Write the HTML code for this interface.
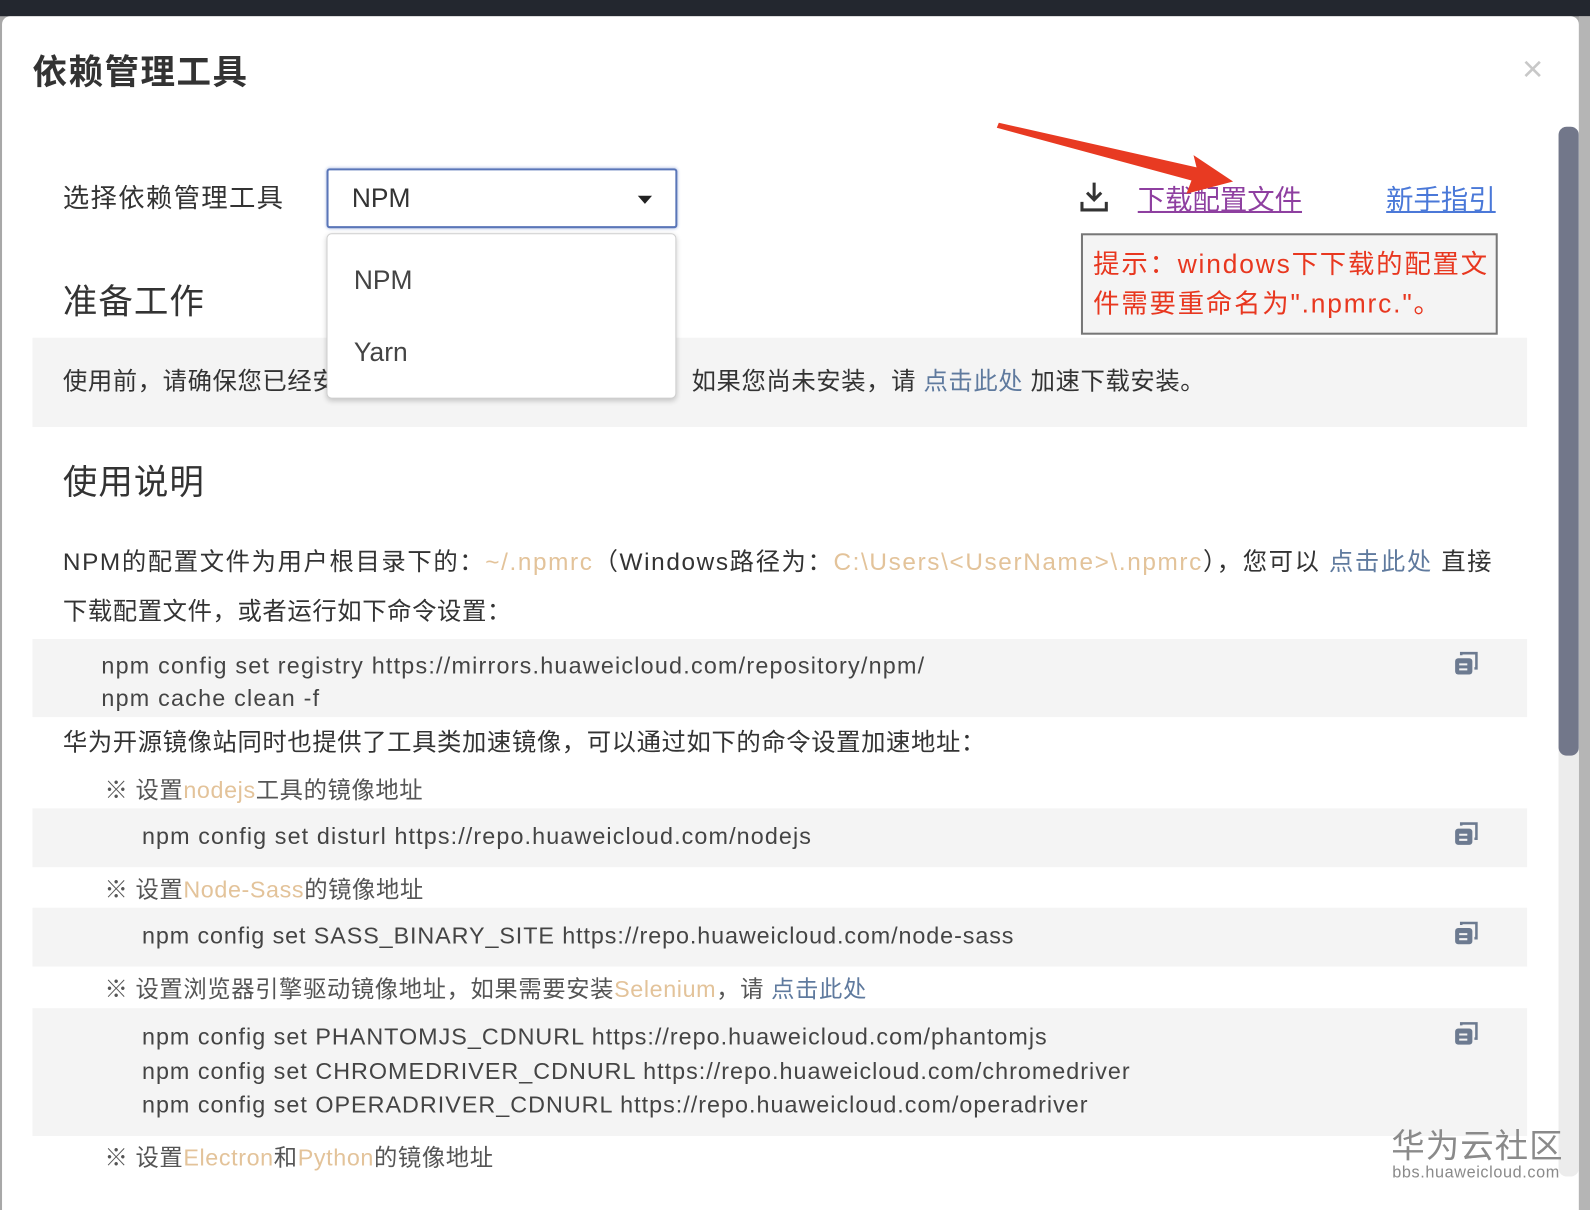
<!DOCTYPE html>
<html><head><meta charset="utf-8"><style>
html,body{margin:0;padding:0;width:1590px;height:1210px;overflow:hidden;background:#a8a8a8}
#w{position:absolute;left:0;top:0;width:1568px;height:1193px;transform:scale(1.01403,1.01425);transform-origin:0 0;font-family:"Liberation Sans","Noto Sans CJK SC",sans-serif;color:#333}
.a{position:absolute;white-space:nowrap}
.t{font-size:24px;line-height:30px;color:#333;letter-spacing:0.6px}
.c{font-size:23px;line-height:30px;color:#444;letter-spacing:1.1px}
.o{color:#e3c39a}
.l{color:#5f7a9e}
.g{position:absolute;left:32px;width:1474px;background:#f4f4f4}
.cp{position:absolute;left:1434px;width:24px;height:24px}
</style></head><body><div id="w">
<div class="a" style="left:0;top:0;width:1568px;height:16px;background:#23272f"></div>
<div class="a" style="left:1557px;top:16px;width:11px;height:1177px;background:#b5b5b5"></div>
<div class="a" style="left:2px;top:16px;width:1555px;height:1177px;background:#fff;border-radius:8px 8px 0 0;overflow:hidden">
 <div class="a" style="left:1535px;top:109px;width:20px;height:1035px;background:#ececec;border-radius:8px"></div>
 <div class="a" style="left:1535px;top:109px;width:20px;height:620px;background:#72778a;border-radius:8px"></div>
</div>
<div class="a" style="left:1501px;top:50px;font-size:36px;line-height:36px;color:#c8c8c8">×</div>
<div class="a" style="left:32px;top:53px;font-size:34px;line-height:38px;font-weight:bold;color:#333;letter-spacing:1.5px">依赖管理工具</div>
<div class="a" style="left:62px;top:180px;font-size:26px;line-height:30px;letter-spacing:1.3px">选择依赖管理工具</div>
<div class="a" style="left:322px;top:166px;width:342px;height:55px;border:2px solid #5a76b8;border-radius:3px;box-shadow:0 0 3px #a8b8e0"></div>
<div class="a" style="left:347px;top:180px;font-size:26px;line-height:30px">NPM</div>
<div class="a" style="left:629px;top:193px;width:0;height:0;border-left:7px solid transparent;border-right:7px solid transparent;border-top:8px solid #222"></div>

<div class="a" style="left:62px;top:279px;font-size:34px;line-height:38px;letter-spacing:1px">准备工作</div>
<div class="g" style="top:333px;height:88px"></div>
<div class="a t" style="left:62px;top:362px">使用前，请确保您已经安装了Node.js。</div>
<div class="a t" style="left:682px;top:362px">如果您尚未安装，请 <span class="l">点击此处</span> 加速下载安装。</div>

<div class="a" style="left:322px;top:230px;width:343px;height:161px;background:#fff;border:1px solid #cfcfcf;border-radius:5px;box-shadow:0 2px 5px rgba(0,0,0,.2)"></div>
<div class="a" style="left:349px;top:261px;font-size:26px;line-height:30px;color:#444">NPM</div>
<div class="a" style="left:349px;top:332px;font-size:26px;line-height:30px;color:#444">Yarn</div>

<svg class="a" style="left:1064px;top:178px" width="32" height="32" viewBox="0 0 32 32"><path d="M15 2v17M8 12l7 7 7-7M3 21v8h24v-8" fill="none" stroke="#333" stroke-width="3"/></svg>
<div class="a" style="left:1122px;top:181px;font-size:27px;line-height:32px;color:#8e3fa0;text-decoration:underline">下载配置文件</div>
<div class="a" style="left:1367px;top:181px;font-size:27px;line-height:32px;color:#4a78d8;text-decoration:underline">新手指引</div>
<div class="a" style="left:1066px;top:230px;width:407px;height:96px;background:#f4f4f4;border:2px solid #777"></div>
<div class="a" style="left:1078px;top:241px;font-size:26px;line-height:39px;color:#e8371f;letter-spacing:1.8px">提示：windows下下载的配置文<br>件需要重命名为".npmrc."。</div>
<svg class="a" style="left:980px;top:115px" width="250" height="80" viewBox="0 0 250 80"><path d="M5 6 L200 50 L197 38 L236 64 L190 76 L195 63 L3 11 Z" fill="#e83a22"/></svg>

<div class="a" style="left:62px;top:457px;font-size:34px;line-height:38px;letter-spacing:1px">使用说明</div>
<div class="a t" style="left:62px;top:540px;letter-spacing:1.6px">NPM的配置文件为用户根目录下的：<span class="o">~/.npmrc</span>（Windows路径为：<span class="o">C:\Users\&lt;UserName&gt;\.npmrc</span>），您可以 <span class="l">点击此处</span> 直接</div>
<div class="a t" style="left:62px;top:589px">下载配置文件，或者运行如下命令设置：</div>
<div class="g" style="top:630px;height:77px"></div>
<div class="a c" style="left:100px;top:641px;letter-spacing:1.2px">npm config set registry https://mirrors.huaweicloud.com/repository/npm/<br><span style="line-height:34px">npm cache clean -f</span></div>
<div class="a t" style="left:62px;top:718px">华为开源镜像站同时也提供了工具类加速镜像，可以通过如下的命令设置加速地址：</div>
<div class="a t" style="left:103px;top:764px;font-size:23px;color:#555">※ 设置<span class="o">nodejs</span>工具的镜像地址</div>
<div class="g" style="top:797px;height:58px"></div>
<div class="a c" style="left:140px;top:809px">npm config set disturl https://repo.huaweicloud.com/nodejs</div>
<div class="a t" style="left:103px;top:862px;font-size:23px;color:#555">※ 设置<span class="o">Node-Sass</span>的镜像地址</div>
<div class="g" style="top:895px;height:58px"></div>
<div class="a c" style="left:140px;top:907px;letter-spacing:0.9px">npm config set SASS_BINARY_SITE https://repo.huaweicloud.com/node-sass</div>
<div class="a t" style="left:103px;top:960px;font-size:23px;color:#555">※ 设置浏览器引擎驱动镜像地址，如果需要安装<span class="o">Selenium</span>，请 <span class="l">点击此处</span></div>
<div class="g" style="top:994px;height:126px"></div>
<div class="a c" style="left:140px;top:1006px;line-height:33.5px;letter-spacing:1px">npm config set PHANTOMJS_CDNURL https://repo.huaweicloud.com/phantomjs<br>npm config set CHROMEDRIVER_CDNURL https://repo.huaweicloud.com/chromedriver<br>npm config set OPERADRIVER_CDNURL https://repo.huaweicloud.com/operadriver</div>
<div class="a" style="left:103px;top:1126px;height:30px;overflow:hidden"><div class="t" style="font-size:23px;color:#555">※ 设置<span class="o">Electron</span>和<span class="o">Python</span>的镜像地址</div></div>

<svg class="cp" style="top:642px" viewBox="0 0 24 24"><path d="M7 4V2h15v15h-2" fill="none" stroke="#6c7a90" stroke-width="2.5"/><rect x="1" y="7" width="17" height="16" rx="3" fill="#6c7a90"/><path d="M5 13h8M5 18h8" stroke="#f4f4f4" stroke-width="2"/></svg>
<svg class="cp" style="top:810px" viewBox="0 0 24 24"><path d="M7 4V2h15v15h-2" fill="none" stroke="#6c7a90" stroke-width="2.5"/><rect x="1" y="7" width="17" height="16" rx="3" fill="#6c7a90"/><path d="M5 13h8M5 18h8" stroke="#f4f4f4" stroke-width="2"/></svg>
<svg class="cp" style="top:908px" viewBox="0 0 24 24"><path d="M7 4V2h15v15h-2" fill="none" stroke="#6c7a90" stroke-width="2.5"/><rect x="1" y="7" width="17" height="16" rx="3" fill="#6c7a90"/><path d="M5 13h8M5 18h8" stroke="#f4f4f4" stroke-width="2"/></svg>
<svg class="cp" style="top:1007px" viewBox="0 0 24 24"><path d="M7 4V2h15v15h-2" fill="none" stroke="#6c7a90" stroke-width="2.5"/><rect x="1" y="7" width="17" height="16" rx="3" fill="#6c7a90"/><path d="M5 13h8M5 18h8" stroke="#f4f4f4" stroke-width="2"/></svg>

<div class="a" style="left:1372px;top:1111px;font-size:33px;line-height:38px;color:#8a8a8a;letter-spacing:1px">华为云社区</div>
<div class="a" style="left:1373px;top:1148px;font-size:16px;line-height:18px;color:#8a8a8a;letter-spacing:0.6px">bbs.huaweicloud.com</div>
</div></body></html>
